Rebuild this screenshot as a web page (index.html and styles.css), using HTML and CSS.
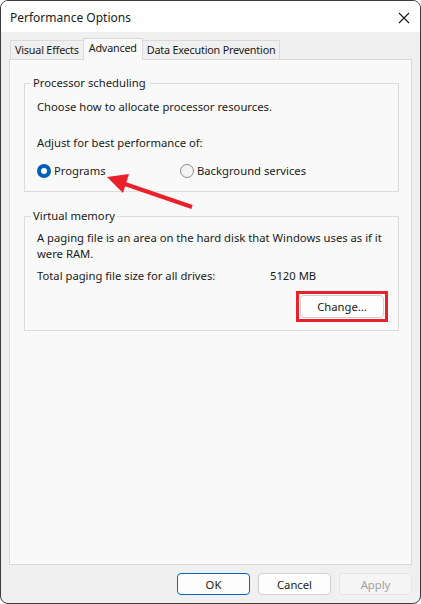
FILE: index.html
```html
<!DOCTYPE html>
<html lang="en">
<head>
<meta charset="utf-8">
<title>Performance Options</title>
<link rel="stylesheet" href="styles.css">
</head>
<body>
<div class="window">
  <div class="titlebar">
    <span class="title">Performance Options</span>
    <svg class="close" width="12" height="12" viewBox="0 0 12 12"><path d="M1 1 L11 11 M11 1 L1 11" stroke="#1b1b1b" stroke-width="1.1" fill="none"/></svg>
  </div>
  <div class="body">
    <div class="tabs">
      <div class="tab">Visual Effects</div>
      <div class="tab active">Advanced</div>
      <div class="tab">Data Execution Prevention</div>
    </div>
    <div class="panel">
      <fieldset class="group group-cpu">
        <legend>Processor scheduling</legend>
        <p class="line">Choose how to allocate processor resources.</p>
        <p class="line adjust">Adjust for best performance of:</p>
        <div class="radios">
          <label class="radio"><span class="dot on"></span>Programs</label>
          <label class="radio second"><span class="dot"></span>Background services</label>
        </div>
      </fieldset>
      <fieldset class="group group-vm">
        <legend>Virtual memory</legend>
        <p class="line">A paging file is an area on the hard disk that Windows uses as if it<br>were RAM.</p>
        <div class="size-row"><span>Total paging file size for all drives:</span><span>5120 MB</span></div>
        <div class="change-row"><span class="highlight"><button class="btn change">Change...</button></span></div>
      </fieldset>
    </div>
    <div class="footer">
      <button class="btn default">OK</button>
      <button class="btn">Cancel</button>
      <button class="btn disabled">Apply</button>
    </div>
  </div>
  <svg class="arrow" width="421" height="604" viewBox="0 0 421 604">
    <line x1="192" y1="207" x2="122" y2="183" stroke="#e8212b" stroke-width="4"/>
    <polygon points="107,177 129,174 123,193" fill="#e8212b"/>
  </svg>
</div>
</body>
</html>
```
FILE: styles.css
```css
* { box-sizing: border-box; }
html, body { margin: 0; padding: 0; background: #ffffff; }
body {
  font-family: "Noto Sans", "Open Sans", sans-serif;
  font-size: 11.25px;
  color: #1a1a1a;
}
.window {
  position: relative;
  width: 421px;
  height: 604px;
  border: 1px solid #3c3c3c;
  border-radius: 8px;
  overflow: hidden;
  display: flex;
  flex-direction: column;
  background: #f0f0f0;
}
.titlebar {
  height: 31px;
  background: #ffffff;
  display: flex;
  align-items: center;
  justify-content: space-between;
  padding: 0 10px 0 9px;
}
.title { font-size: 12px; line-height: 16px; margin-top: 2px; }
.close { display: block; margin-top: 3px; }
.body {
  flex: 1;
  display: flex;
  flex-direction: column;
  padding: 7px 8px 8px 8px;
}
.tabs {
  display: flex;
  align-items: flex-end;
  padding-left: 1px;
  height: 21px;
  position: relative;
  z-index: 1;
  margin-bottom: -1px;
}
.tab {
  height: 19px;
  border: 1px solid #d9d9d9;
  border-bottom: none;
  background: #f0f0f0;
  padding: 0 4px;
  font-size: 10.8px;
  line-height: 18px;
  white-space: nowrap;
  margin-bottom: 1px;
  letter-spacing: -0.2px;
}
.tab + .tab { margin-left: -1px; }
.tab.active {
  height: 22px;
  background: #f9f9f9;
  margin-bottom: 0;
  line-height: 17px;
  padding: 0 5px;
}
.panel {
  flex: 1;
  background: #f9f9f9;
  border: 1px solid #d9d9d9;
  padding: 15px 12px 0 14px;
}
.group {
  margin: 0;
  border: 1px solid #dcdcdc;
  padding: 0 10px 12px 12px;
  min-width: 0;
}
.group legend {
  padding: 0 2px;
  margin-left: -6px;
  line-height: 16px;
}
.line { margin: 0; line-height: 16px; }
.group-cpu .line:first-of-type { margin-top: 8px; }
.adjust { margin-top: 20px !important; }
.radios {
  display: flex;
  margin-top: 12px;
  line-height: 16px;
}
.radio { display: flex; align-items: center; }
.radio:first-child { width: 143px; }
.dot {
  width: 14px;
  height: 14px;
  border-radius: 50%;
  border: 1px solid #8b8b8b;
  background: #f3f3f3;
  margin-right: 3px;
  flex: none;
}
.dot.on {
  border: 4px solid #005fb8;
  background: #ffffff;
}
.group-vm { margin-top: 16px; padding-bottom: 8px; }
.group-vm .line { margin-top: 6px; }
.size-row {
  display: grid;
  grid-template-columns: 233px auto;
  margin-top: 6px;
  line-height: 16px;
}
.change-row {
  display: flex;
  justify-content: flex-end;
  margin-top: 7px;
}
.highlight {
  display: block;
  border: 3px solid #e8212b;
  padding: 1px;
}
.btn {
  font-family: inherit;
  font-size: 11.25px;
  color: #1a1a1a;
  background: #fdfdfd;
  border: 1px solid #d0d0d0;
  border-radius: 4px;
  height: 22px;
  width: 73px;
  padding: 0;
  margin: 0;
  display: block;
}
.change { width: 84px; height: 23px; }
.footer {
  display: flex;
  justify-content: flex-end;
  gap: 8px;
  margin-top: 8px;
}
.btn.default { border: 1px solid #0067c0; }
.btn.disabled { color: #a0a0a0; border-color: #e5e5e5; background: #f5f5f5; }
.arrow { position: absolute; left: -1px; top: -1px; pointer-events: none; }
```
